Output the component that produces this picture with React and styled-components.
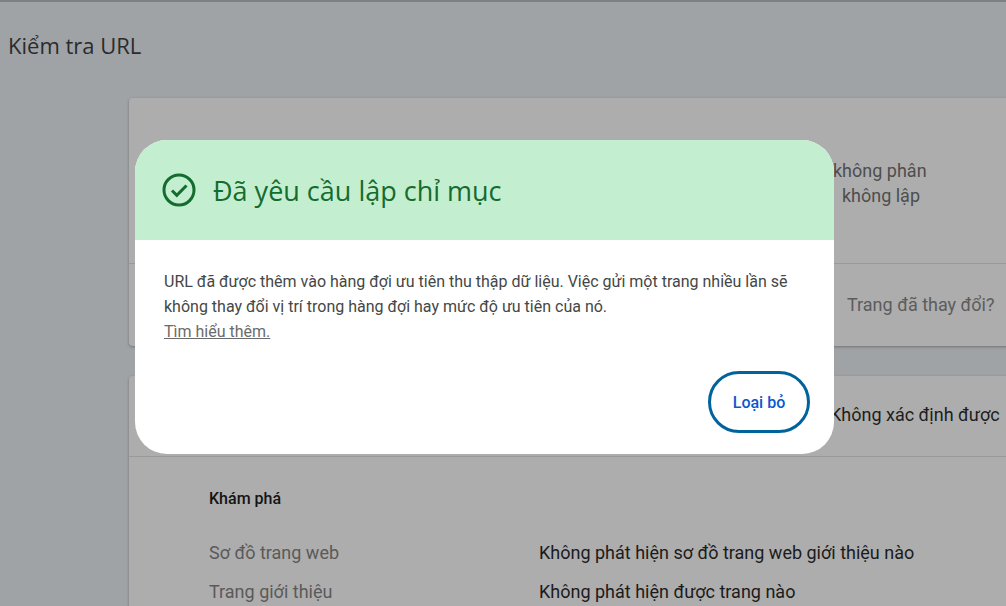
import React from "react";
import styled, { createGlobalStyle } from "styled-components";

const Global = createGlobalStyle`
  html, body { margin: 0; padding: 0; background: #a0a3a6; overflow: hidden; }
  body { font-family: Roboto, "Noto Sans", sans-serif; }
`;

const Page = styled.div`
  position: relative;
  width: 1006px;
  height: 606px;
  border-top: 2px solid #7d8084;
  box-sizing: border-box;
  overflow: hidden;
`;
const Title = styled.h1`
  margin: 0;
  padding: 28px 0 0 8px;
  font-family: "Open Sans", "Noto Sans", sans-serif;
  font-weight: 400;
  font-size: 22px;
  line-height: 30px;
  color: #2a2b2d;
`;
const Cards = styled.div`
  margin: 38px 0 0 129px;
  display: flex;
  flex-direction: column;
  gap: 30px;
`;
const Card = styled.div`
  background: #adadad;
  width: 900px;
  border-radius: 4px 0 0 4px;
  box-shadow: 0 1px 3px rgba(0,0,0,0.3);
`;
const Row = styled.div`
  height: ${p => p.h}px;
  box-sizing: border-box;
  border-bottom: ${p => (p.line ? "1px solid #9a9a9a" : "none")};
  padding: ${p => p.pad};
  color: ${p => p.c};
  font-size: 18px;
  line-height: 25px;
`;
const Detail = styled.div`
  padding: 32px 0 0 80px;
  display: flex;
  flex-direction: column;
`;
const Section = styled.div`
  font-size: 16px;
  font-weight: 500;
  color: #141414;
  margin-bottom: 25px;
`;
const Line = styled.div`
  display: grid;
  grid-template-columns: 330px 1fr;
  font-size: 18px;
  line-height: 39px;
`;
const Label = styled.span` color: #5a5a5a; `;
const Value = styled.span` color: #1b1b1b; `;

const Dialog = styled.div`
  position: absolute;
  left: 135px;
  top: 138px;
  width: 699px;
  height: 314px;
  background: #fff;
  border-radius: 32px;
  overflow: hidden;
  display: flex;
  flex-direction: column;
`;
const Head = styled.div`
  background: #c4eed0;
  height: 100px;
  display: flex;
  align-items: center;
  gap: 17px;
  padding-left: 27px;
  color: #146c2e;
  font-family: "Open Sans", "Noto Sans", sans-serif;
  font-size: 27px;
`;
const Body = styled.div`
  padding: 29px 29px 0;
  font-size: 16px;
  line-height: 25px;
  color: #444746;
  flex: 1;
`;
const Link = styled.a` color: #6b6b6b; text-decoration: underline; `;
const Actions = styled.div`
  display: flex;
  justify-content: flex-end;
  padding: 0 24px 21px 0;
`;
const Btn = styled.button`
  width: 102px;
  height: 62px;
  border-radius: 31px;
  border: 3px solid #00639b;
  background: #fff;
  color: #0b57d0;
  font-family: Roboto, sans-serif;
  font-size: 16px;
  font-weight: 500;
`;

export default function App() {
  return (
    <Page>
      <Global />
      <Title>Kiểm tra URL</Title>
      <Cards>
        <Card>
          <Row h={166} line pad="60px 0 0 704px" c="#4e4e4e">
            không phân<br />&nbsp;&nbsp;không lập
          </Row>
          <Row h={82} pad="28px 0 0 718px" c="#5c5c5c">Trang đã thay đổi?</Row>
        </Card>
        <Card>
          <Row h={81} line pad="26px 0 0 701px" c="#1d1d1d">Không xác định được</Row>
          <Detail>
            <Section>Khám phá</Section>
            <Line><Label>Sơ đồ trang web</Label><Value>Không phát hiện sơ đồ trang web giới thiệu nào</Value></Line>
            <Line><Label>Trang giới thiệu</Label><Value>Không phát hiện được trang nào</Value></Line>
          </Detail>
        </Card>
      </Cards>
      <Dialog>
        <Head>
          <svg width="34" height="34" viewBox="0 0 34 34">
            <circle cx="17" cy="17" r="15" fill="none" stroke="#146c2e" strokeWidth="3" />
            <path d="M10 17.5l4.8 4.8L24.5 12.5" fill="none" stroke="#146c2e" strokeWidth="3" />
          </svg>
          Đã yêu cầu lập chỉ mục
        </Head>
        <Body>
          URL đã được thêm vào hàng đợi ưu tiên thu thập dữ liệu. Việc gửi một trang nhiều lần sẽ không thay đổi vị trí trong hàng đợi hay mức độ ưu tiên của nó.<br />
          <Link>Tìm hiểu thêm.</Link>
        </Body>
        <Actions><Btn>Loại bỏ</Btn></Actions>
      </Dialog>
    </Page>
  );
}
